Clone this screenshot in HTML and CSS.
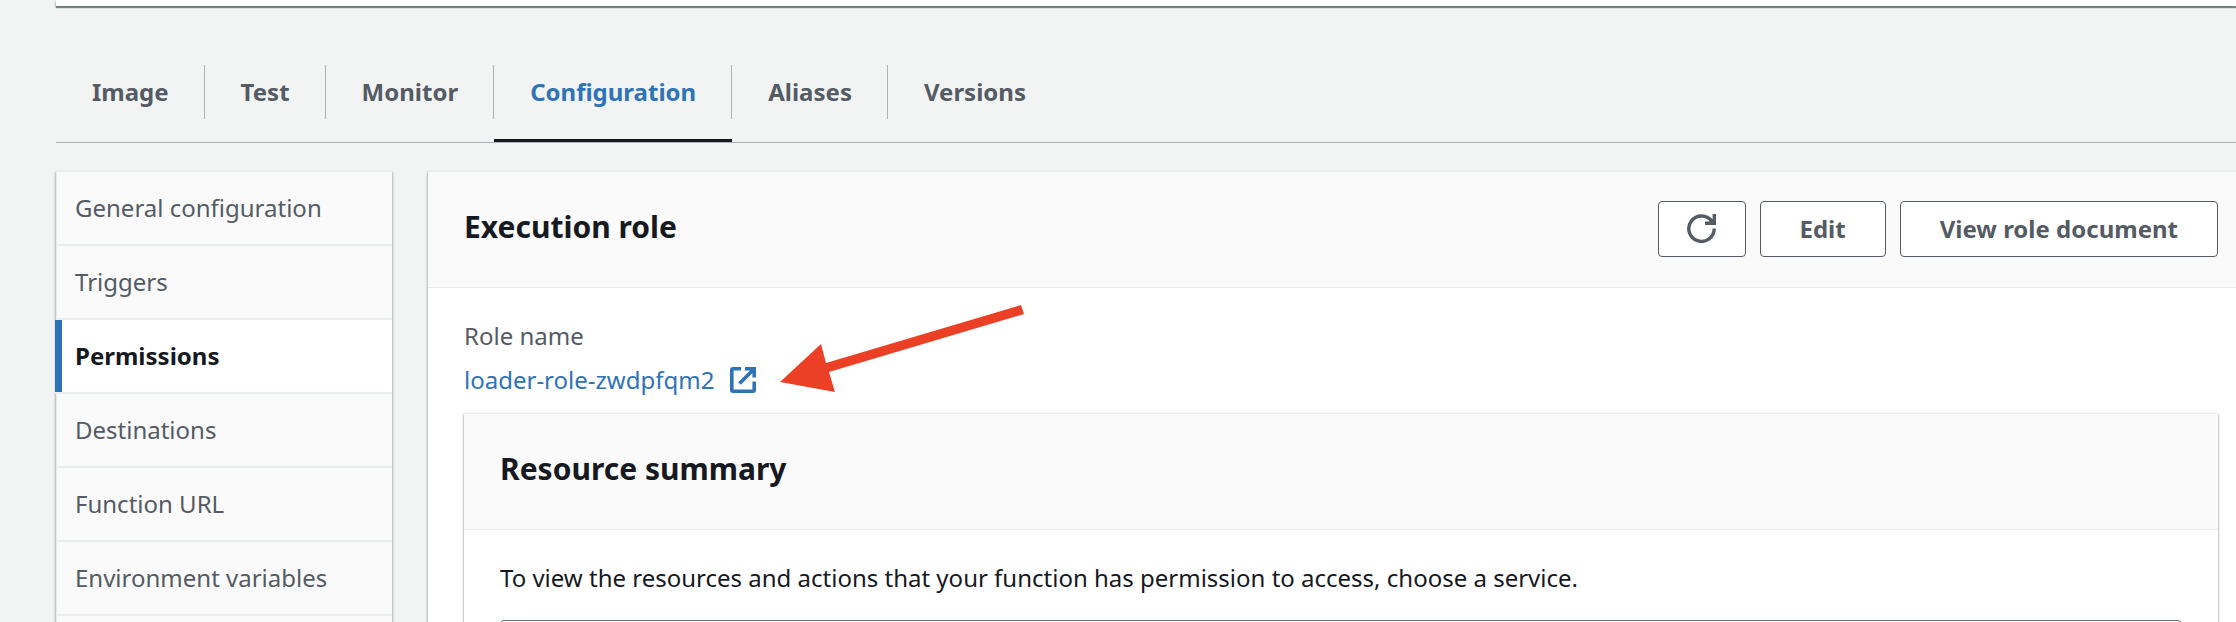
FILE: index.html
```html
<!DOCTYPE html>
<html lang="en">
<head>
<meta charset="utf-8">
<title>Function configuration</title>
<link rel="stylesheet" href="styles.css">
</head>
<body>
<div class="page">
  <div class="overview card"></div>
  <nav class="tabs" aria-label="Function sections">
    <a class="tab" href="#image"><span class="tab-label">Image</span></a>
    <a class="tab" href="#test"><span class="tab-label">Test</span></a>
    <a class="tab" href="#monitor"><span class="tab-label">Monitor</span></a>
    <a class="tab tab-active" href="#configuration" aria-current="page"><span class="tab-label">Configuration</span></a>
    <a class="tab" href="#aliases"><span class="tab-label">Aliases</span></a>
    <a class="tab" href="#versions"><span class="tab-label">Versions</span></a>
  </nav>
  <div class="columns">
    <nav class="side card" aria-label="Configuration">
      <a class="side-link" href="#general">General configuration</a>
      <a class="side-link" href="#triggers">Triggers</a>
      <a class="side-link side-active" href="#permissions" aria-current="page">Permissions</a>
      <a class="side-link" href="#destinations">Destinations</a>
      <a class="side-link" href="#url">Function URL</a>
      <a class="side-link" href="#env">Environment variables</a>
      <a class="side-link" href="#tags">&nbsp;</a>
    </nav>
    <main class="main card">
      <header class="card-header">
        <h2 class="title">Execution role</h2>
        <div class="actions">
          <button class="btn btn-icon" type="button" aria-label="Refresh">
            <svg class="icon-refresh" viewBox="0 0 29 29" aria-hidden="true"><path d="M27.200 14.500A12.700 12.700 0 1 1 25 7.500M27.300 0V9.300H18"/><path class="solid" d="M21 9.500L27 4V9.500Z"/></svg>
          </button>
          <button class="btn" type="button">Edit</button>
          <button class="btn" type="button">View role document</button>
        </div>
      </header>
      <div class="role">
        <div class="role-label">Role name</div>
        <div class="role-value">
          <a class="role-link" href="#role">loader-role-zwdpfqm2<svg class="icon-external" viewBox="0 0 26 26" aria-hidden="true"><path d="M11 1.800H3Q1.800 1.800 1.800 3V23Q1.800 24.200 3 24.200H23Q24.200 24.200 24.200 23V14.500M15 1.800H24.200V10.500M23.500 2.500L9.500 16.500"/></svg></a>
          <svg class="arrow" viewBox="0 0 246 88" aria-hidden="true"><path d="M1 78L42 40L47 59L242 1L245 10L50 68L56 88Z"/></svg>
        </div>
      </div>
      <section class="summary card">
        <header class="card-header"><h2 class="title">Resource summary</h2></header>
        <div class="summary-body">
          <label class="hint" for="service">To view the resources and actions that your function has permission to access, choose a service.</label>
          <select class="select" id="service"><option></option></select>
        </div>
      </section>
    </main>
  </div>
</div>
</body>
</html>
```
FILE: styles.css
```css
* { box-sizing: border-box; }
body {
  margin: 0;
  height: 100vh;
  overflow: hidden;
  background: #f2f3f3;
  color: #16191f;
  font: 24px/36px "Noto Sans", "Open Sans", sans-serif;
}
.page { padding-left: 56px; }
.card {
  background: #fff;
  border-top: 1px solid #eaeded;
  box-shadow: 0 2px 2px 0 rgba(0, 28, 36, 0.3), 1px 1px 2px 0 rgba(0, 28, 36, 0.15), -1px 1px 2px 0 rgba(0, 28, 36, 0.15);
}
.overview {
  height: 6px;
  border-top: 0;
  box-shadow: 0 2px 1px 0 rgba(0, 28, 36, 0.5), -1px 1px 2px 0 rgba(0, 28, 36, 0.15);
}
.tabs {
  display: flex;
  margin-top: 38px;
  border-bottom: 1px solid #aab7b8;
}
.tab {
  padding: 21px 0 20px;
  border-bottom: 3px solid transparent;
  color: #545b64;
  font-weight: 700;
  text-decoration: none;
}
.tab-label {
  display: block;
  padding: 9px 35px 9px 36px;
  border-right: 1px solid #aab7b8;
}
.tab:last-child .tab-label { border-right-color: transparent; }
.tab-active { border-bottom-color: #16191f; color: #2e73b8; }
.columns { display: flex; gap: 36px; margin-top: 28px; }
.side { flex: none; width: 336px; border-left: 1px solid #eaeded; }
.side-link {
  display: block;
  padding: 18px;
  border-bottom: 2px solid #eaeded;
  background: #fafafa;
  color: #545b64;
  text-decoration: none;
}
.side-active {
  margin-left: -2px;
  padding-left: 20px;
  box-shadow: inset 7px 0 0 #2e73b8;
  background: #fff;
  color: #16191f;
  font-weight: 700;
}
.main { flex: 1; min-width: 0; }
.card-header {
  display: flex;
  align-items: center;
  justify-content: space-between;
  min-height: 116px;
  padding: 0 18px 2px 36px;
  border-bottom: 1px solid #eaeded;
  background: #fafafa;
}
.title { margin: 0; padding-bottom: 4px; font-size: 30px; line-height: 44px; font-weight: 700; }
.actions { display: flex; gap: 14px; }
.btn {
  height: 56px;
  padding: 0 39px;
  border: 1px solid #545b64;
  border-radius: 4px;
  background: #fff;
  color: #545b64;
  font: inherit;
  font-weight: 700;
}
.btn-icon { display: flex; align-items: center; justify-content: center; width: 88px; padding: 0; }
.icon-refresh { width: 29px; height: 29px; fill: none; stroke: currentColor; stroke-width: 3.4; }
.solid { fill: currentColor; stroke: none; }
.role { padding: 30px 36px 0; }
.role-label { color: #545b64; }
.role-value { position: relative; margin-top: 8px; }
.role-link { display: inline-flex; align-items: center; gap: 16px; color: #2e73b8; text-decoration: none; }
.icon-external { width: 26px; height: 26px; fill: none; stroke: currentColor; stroke-width: 3.6; }
.arrow { position: absolute; left: 315px; bottom: 6px; width: 246px; height: 88px; fill: #eb4026; }
.summary { margin: 15px 18px 0 36px; }
.summary-body { padding: 30px 36px 36px; }
.hint { display: block; }
.select {
  display: block;
  width: 100%;
  height: 60px;
  margin-top: 24px;
  border: 1px solid #687078;
  border-radius: 4px;
  background: #fff;
  appearance: none;
}
```
